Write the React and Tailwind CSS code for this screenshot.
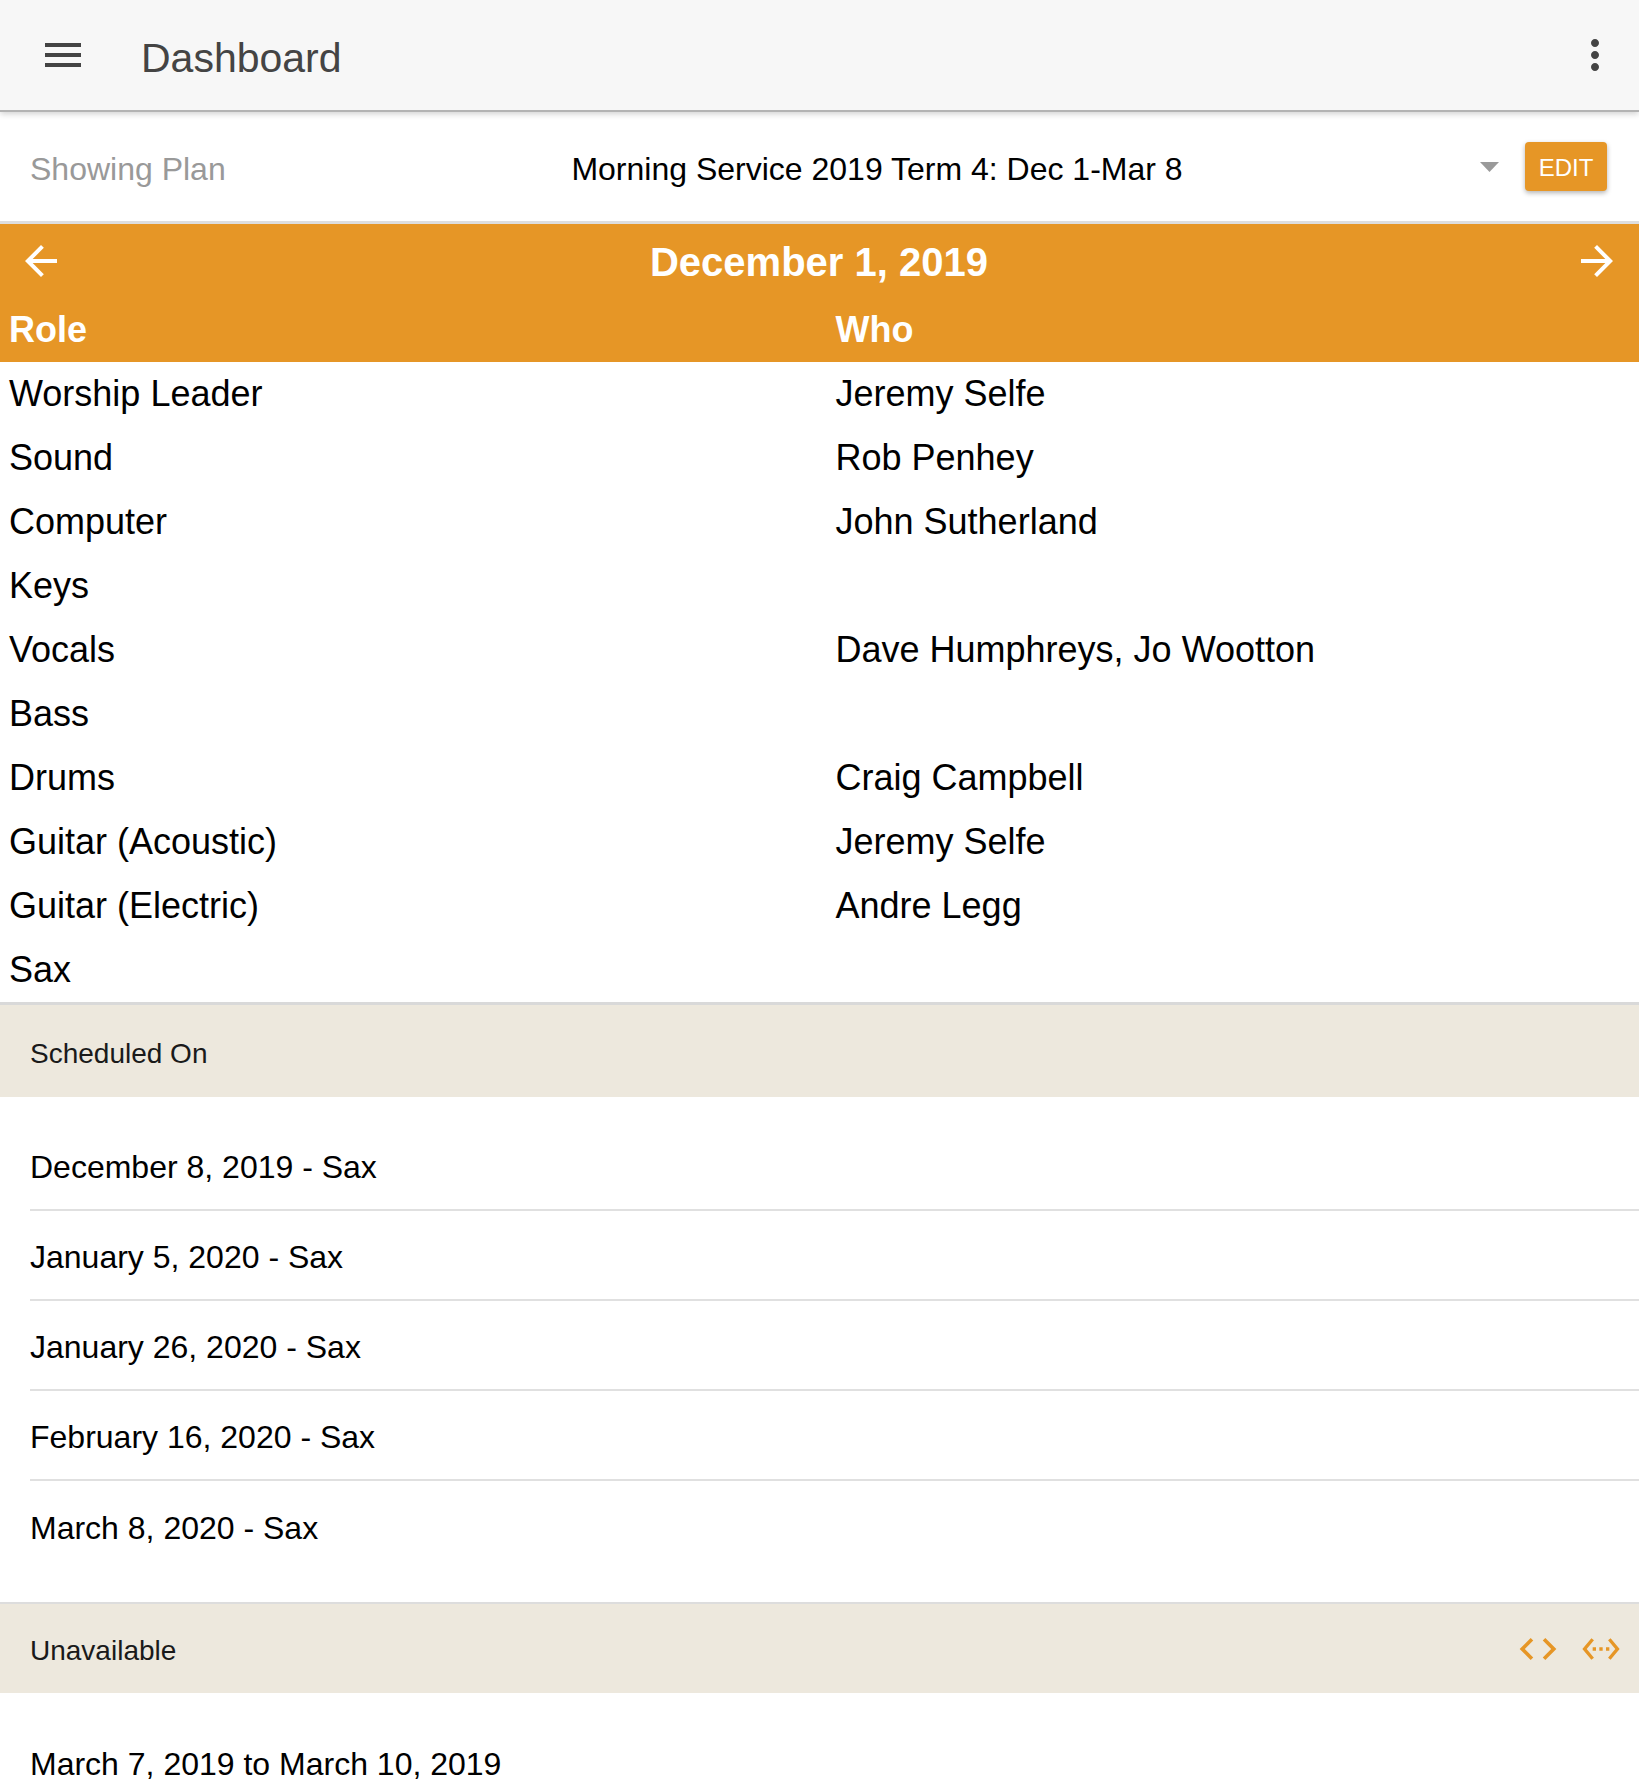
import React from "react";

const ORANGE = "#e69626";

function Icon({ d, size, color, className = "" }) {
  return (
    <svg width={size} height={size} viewBox="0 0 24 24" className={className} style={{ display: "block" }}>
      <path d={d} fill={color} />
    </svg>
  );
}

const P = {
  menu: "M3 18h18v-2H3v2zm0-5h18v-2H3v2zm0-7v2h18V6H3z",
  more: "M12 8c1.1 0 2-.9 2-2s-.9-2-2-2-2 .9-2 2 .9 2 2 2zm0 2c-1.1 0-2 .9-2 2s.9 2 2 2 2-.9 2-2-.9-2-2-2zm0 6c-1.1 0-2 .9-2 2s.9 2 2 2 2-.9 2-2-.9-2-2-2z",
  back: "M20 11H7.83l5.59-5.59L12 4l-8 8 8 8 1.41-1.41L7.83 13H20v-2z",
  fwd: "M12 4l-1.41 1.41L16.17 11H4v2h12.17l-5.58 5.59L12 20l8-8z",
  code: "M9.4 16.6L4.8 12l4.6-4.6L8 6l-6 6 6 6 1.4-1.4zm5.2 0l4.6-4.6-4.6-4.6L16 6l6 6-6 6-1.4-1.4z",
  eth: "M7.77 6.76L6.23 5.48.82 12l5.41 6.52 1.54-1.28L3.42 12l4.35-5.24zM7 13h2v-2H7v2zm10-2h-2v2h2v-2zm-6 2h2v-2h-2v2zm6.77-7.52l-1.54 1.28L20.58 12l-4.35 5.24 1.54 1.28L23.18 12l-5.41-6.52z",
};

const rows = [
  ["Worship Leader", "Jeremy Selfe"],
  ["Sound", "Rob Penhey"],
  ["Computer", "John Sutherland"],
  ["Keys", ""],
  ["Vocals", "Dave Humphreys, Jo Wootton"],
  ["Bass", ""],
  ["Drums", "Craig Campbell"],
  ["Guitar (Acoustic)", "Jeremy Selfe"],
  ["Guitar (Electric)", "Andre Legg"],
  ["Sax", ""],
];

const scheduled = [
  "December 8, 2019 - Sax",
  "January 5, 2020 - Sax",
  "January 26, 2020 - Sax",
  "February 16, 2020 - Sax",
  "March 8, 2020 - Sax",
];

export default function App() {
  return (
    <div
      className="w-[1639px] bg-white text-black"
      style={{ fontFamily: '"Liberation Sans", Arial, sans-serif' }}
    >
      {/* Top app bar */}
      <header className="relative z-10 flex h-[112px] items-center border-b-2 border-[#b3b3b3] bg-[#f7f7f7] shadow-[0_2px_6px_rgba(0,0,0,0.18)]">
        <Icon d={P.menu} size={48} color="#444444" className="ml-[39px]" />
        <h1 className="ml-[54px] pt-[7px] text-[41px] leading-none text-[#444444]">Dashboard</h1>
        <div className="flex-1" />
        <Icon d={P.more} size={48} color="#444444" className="mr-[20px]" />
      </header>

      {/* Plan selector */}
      <div className="flex h-[112px] items-center border-b-[3px] border-[#dedede] pl-[30px] pr-[32px]">
        <span className="w-[244px] pt-[5px] text-[32px] leading-none text-[#999999]">Showing Plan</span>
        <div className="flex flex-1 items-center pr-[11px]">
          <span className="flex-1 pt-[5px] text-center text-[32px] leading-none text-black">
            Morning Service 2019 Term 4: Dec 1-Mar 8
          </span>
          <svg width="19" height="10" viewBox="0 0 19 10" style={{ display: "block" }}>
            <polygon points="0,0 19,0 9.5,10" fill="#9a9a9a" />
          </svg>
        </div>
        <button className="ml-[15px] flex h-[49px] w-[82px] items-center justify-center rounded-[4px] bg-[#e69626] pt-[2px] text-[24px] leading-none text-white shadow-[0_2px_5px_rgba(0,0,0,0.3)]">
          EDIT
        </button>
      </div>

      {/* Orange date header */}
      <div className="bg-[#e69626] text-white">
        <div className="flex h-[74px] items-center">
          <Icon d={P.back} size={48} color="#ffffff" className="ml-[17px]" />
          <div className="flex-1 pt-[2px] text-center text-[40px] font-bold leading-none">December 1, 2019</div>
          <Icon d={P.fwd} size={48} color="#ffffff" className="mr-[18px]" />
        </div>
        <div className="grid h-[64px] grid-cols-2 items-center text-[36px] font-bold leading-none">
          <div className="pl-[9px]">Role</div>
          <div className="pl-[16px]">Who</div>
        </div>
      </div>

      {/* Roster table */}
      <div>
        {rows.map(([role, who], i) => (
          <div key={i} className="grid h-[64px] grid-cols-2 items-center text-[36px] leading-none text-black">
            <div className="pl-[9px]">{role}</div>
            <div className="pl-[16px]">{who}</div>
          </div>
        ))}
      </div>

      {/* Scheduled On */}
      <div className="flex h-[95px] items-center border-t-[3px] border-[#d9d9d9] bg-[#ede8dd] px-[30px] pt-[6px] text-[28px] leading-none text-[#1a1a1a]">
        Scheduled On
      </div>
      <div className="pb-[31px] pt-[24px]">
        {scheduled.map((s, i) => (
          <div
            key={i}
            className={
              "ml-[30px] flex h-[90px] items-center pt-[4px] text-[32px] leading-none text-black " +
              (i < scheduled.length - 1 ? "border-b-2 border-[#e0e0e0]" : "")
            }
          >
            {s}
          </div>
        ))}
      </div>

      {/* Unavailable */}
      <div className="flex h-[91px] items-center border-t-2 border-[#dddddd] bg-[#ede8dd] pl-[30px] pr-[18px] text-[28px] leading-none text-[#1a1a1a]">
        <span className="flex-1 pt-[5px]">Unavailable</span>
        <Icon d={P.code} size={44} color={ORANGE} />
        <Icon d={P.eth} size={40} color={ORANGE} className="ml-[21px]" />
      </div>
      <div className="pt-[24px]">
        <div className="ml-[30px] flex h-[90px] items-center pt-[3px] text-[32px] leading-none text-black">
          March 7, 2019 to March 10, 2019
        </div>
      </div>
    </div>
  );
}
